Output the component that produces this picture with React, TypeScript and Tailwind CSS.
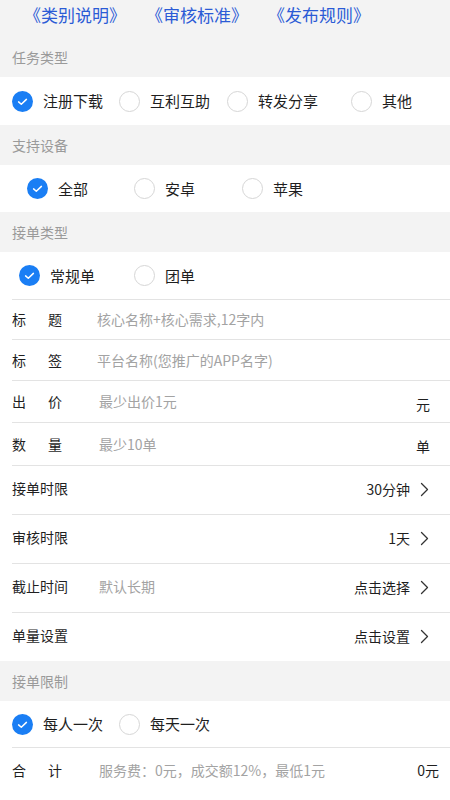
import React from "react";

function Radio({ checked }: { checked: boolean }) {
  if (checked) {
    return (
      <span className="flex h-[21px] w-[21px] shrink-0 items-center justify-center rounded-full bg-[#1a7ef4]">
        <svg width="21" height="21" viewBox="0 0 21 21">
          <path d="M6.6 10.9 L9.3 13.3 L14.4 8.4" fill="none" stroke="#fff" strokeWidth="1.5" strokeLinecap="round" strokeLinejoin="round" />
        </svg>
      </span>
    );
  }
  return <span className="block h-[21px] w-[21px] shrink-0 rounded-full border border-[#d6d6d6] bg-white" />;
}

function Option({ label, checked, w }: { label: string; checked?: boolean; w: string }) {
  return (
    <div className={`flex items-center ${w}`}>
      <Radio checked={!!checked} />
      <span className="ml-[10px] text-[15px] leading-[20px] text-[#1f1f1f]">{label}</span>
    </div>
  );
}

function Header({ title }: { title: string }) {
  return (
    <div className="flex h-[40px] items-center pl-3 text-[14px] text-[#9a9a9a]">{title}</div>
  );
}

function Chevron() {
  return (
    <svg width="9" height="15" viewBox="0 0 9 15" className="ml-[10px]">
      <path d="M1.5 1.5 L7.5 7.5 L1.5 13.5" fill="none" stroke="#333" strokeWidth="1.3" strokeLinecap="round" strokeLinejoin="round" />
    </svg>
  );
}

function SplitLabel({ a, b, w }: { a: string; b: string; w: string }) {
  return (
    <div className={`flex shrink-0 ${w}`}>
      <span className="w-[36px]">{a}</span>
      <span>{b}</span>
    </div>
  );
}

export default function App() {
  return (
    <div className="min-h-[800px] w-full bg-[#f3f3f3] font-['Noto_Sans_CJK_SC','Noto_Sans',sans-serif] text-[#1f1f1f]">
      <div className="flex h-[37px] items-start gap-[20px] pl-[24px] pt-[3px] text-[17px] leading-[24px] text-[#2b5bd6]">
        <span>《类别说明》</span>
        <span>《审核标准》</span>
        <span>《发布规则》</span>
      </div>

      <Header title="任务类型" />
      <div className="flex h-[48px] items-center bg-white pl-3">
        <Option label="注册下载" checked w="w-[107px]" />
        <Option label="互利互助" w="w-[108px]" />
        <Option label="转发分享" w="w-[124px]" />
        <Option label="其他" w="" />
      </div>

      <Header title="支持设备" />
      <div className="flex h-[47px] items-center bg-white pl-[27px]">
        <Option label="全部" checked w="w-[107px]" />
        <Option label="安卓" w="w-[108px]" />
        <Option label="苹果" w="" />
      </div>

      <Header title="接单类型" />
      <div className="bg-white text-[14px]">
        <div className="ml-3 flex h-[48px] items-center border-b border-[#e3e3e3] pl-[7px]">
          <Option label="常规单" checked w="w-[115px]" />
          <Option label="团单" w="" />
        </div>
        <div className="ml-3 flex h-[40px] items-center border-b border-[#e3e3e3]">
          <SplitLabel a="标" b="题" w="w-[85px]" />
          <span className="text-[#a3a3a3]">核心名称+核心需求,12字内</span>
        </div>
        <div className="ml-3 flex h-[41px] items-center border-b border-[#e3e3e3]">
          <SplitLabel a="标" b="签" w="w-[85px]" />
          <span className="text-[#a3a3a3]">平台名称(您推广的APP名字)</span>
        </div>
        <div className="ml-3 flex h-[42px] items-center border-b border-[#e3e3e3] pr-[20px]">
          <SplitLabel a="出" b="价" w="w-[87px]" />
          <span className="flex-1 text-[#a3a3a3]">最少出价1元</span>
          <span className="mt-[5px]">元</span>
        </div>
        <div className="ml-3 flex h-[43px] items-center border-b border-[#e3e3e3] pr-[20px]">
          <SplitLabel a="数" b="量" w="w-[87px]" />
          <span className="flex-1 text-[#a3a3a3]">最少10单</span>
          <span className="mt-[4px]">单</span>
        </div>
        <div className="ml-3 flex h-[49px] items-center border-b border-[#e3e3e3] pb-[4px] pr-[21px]">
          <span className="flex-1">接单时限</span>
          <span className="mt-[3px] flex items-center">30分钟<Chevron /></span>
        </div>
        <div className="ml-3 flex h-[49px] items-center border-b border-[#e3e3e3] pb-[4px] pr-[21px]">
          <span className="flex-1">审核时限</span>
          <span className="mt-[3px] flex items-center">1天<Chevron /></span>
        </div>
        <div className="ml-3 flex h-[49px] items-center border-b border-[#e3e3e3] pb-[4px] pr-[21px]">
          <span className="w-[87px]">截止时间</span>
          <span className="flex-1 text-[#a3a3a3]">默认长期</span>
          <span className="mt-[3px] flex items-center">点击选择<Chevron /></span>
        </div>
        <div className="ml-3 flex h-[48px] items-center pb-[4px] pr-[21px]">
          <span className="flex-1">单量设置</span>
          <span className="mt-[3px] flex items-center">点击设置<Chevron /></span>
        </div>
      </div>

      <Header title="接单限制" />
      <div className="bg-white text-[14px]">
        <div className="ml-3 flex h-[47px] items-center border-b border-[#e3e3e3]">
          <Option label="每人一次" checked w="w-[107px]" />
          <Option label="每天一次" w="" />
        </div>
        <div className="ml-3 flex h-[44px] items-center pr-[11px]">
          <SplitLabel a="合" b="计" w="w-[87px]" />
          <span className="flex-1 text-[#a3a3a3]">服务费：0元，成交额12%，最低1元</span>
          <span>0元</span>
        </div>
        <div className="h-[40px]" />
      </div>
    </div>
  );
}
